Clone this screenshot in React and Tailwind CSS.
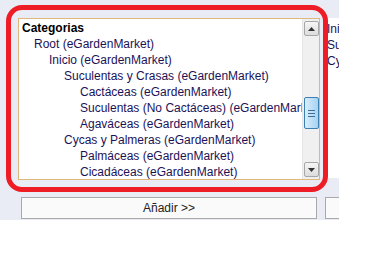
import React from "react";

const rows = [
  { t: "Categorias", pl: "pl-[3px]", bold: true },
  { t: "Root (eGardenMarket)", pl: "pl-[15px]" },
  { t: "Inicio (eGardenMarket)", pl: "pl-[30px]" },
  { t: "Suculentas y Crasas (eGardenMarket)", pl: "pl-[45px]" },
  { t: "Cactáceas (eGardenMarket)", pl: "pl-[61px]" },
  { t: "Suculentas (No Cactáceas) (eGardenMarket)", pl: "pl-[61px]" },
  { t: "Agaváceas (eGardenMarket)", pl: "pl-[61px]" },
  { t: "Cycas y Palmeras (eGardenMarket)", pl: "pl-[45px]" },
  { t: "Palmáceas (eGardenMarket)", pl: "pl-[61px]" },
  { t: "Cicadáceas (eGardenMarket)", pl: "pl-[61px]" },
];

function ArrowBtn({ up }) {
  return (
    <div className="mx-[1px] h-[15px] w-[15px] rounded-[2px] border border-[#a7a7a7] bg-gradient-to-b from-[#f6f6f6] to-[#dcdcdc] flex items-center justify-center">
      <svg width="7" height="4" viewBox="0 0 7 4">
        {up ? (
          <polygon points="0,4 7,4 3.5,0" fill="#333" />
        ) : (
          <polygon points="0,0 7,0 3.5,4" fill="#333" />
        )}
      </svg>
    </div>
  );
}

export default function App() {
  return (
    <div
      className="relative w-[339px] h-[220px] overflow-hidden bg-[#e9ecf5] text-[12px] leading-[16px]"
      style={{ fontFamily: '"Liberation Sans", Arial, sans-serif' }}
    >
      <div className="flex pt-[18px] pl-[18px]">
        <div className="w-[302px] shrink-0 flex flex-col">
          <div className="h-[162px] border border-[#dfb77a] bg-white flex overflow-hidden">
            <div className="flex-1 min-w-0 pt-[1px] overflow-hidden">
              {rows.map((r, i) => (
                <div
                  key={i}
                  className={`${r.pl} h-[16px] whitespace-nowrap ${
                    r.bold ? "font-bold text-black" : "text-[#1c1258]"
                  }`}
                >
                  {r.t}
                </div>
              ))}
            </div>
            <div className="w-[17px] shrink-0 bg-[#f0f0f0] border-l border-[#e6e6e6] flex flex-col items-center py-[2px]">
              <ArrowBtn up />
              <div className="flex-1 w-full flex flex-col items-center pt-[61px]">
                <div className="w-[15px] h-[32px] rounded-[2px] border border-[#3c7fb1] bg-gradient-to-r from-[#d9eefc] via-[#bfe0f8] to-[#a7d3f2] flex flex-col items-center justify-center gap-[2px]">
                  <div className="w-[7px] h-[1px] bg-[#3c6e98]" />
                  <div className="w-[7px] h-[1px] bg-[#3c6e98]" />
                  <div className="w-[7px] h-[1px] bg-[#3c6e98]" />
                </div>
              </div>
              <ArrowBtn />
            </div>
          </div>
          <button className="mt-[17px] mx-[3px] h-[22px] border border-[#a9a9a9] bg-[#fafafa] text-[#222] text-[12px]">
            Añadir &gt;&gt;
          </button>
        </div>
        <div className="ml-[3px] w-[120px] shrink-0 flex flex-col">
          <div className="h-[160px] bg-white pt-[3px] pl-[4px] text-[#1c1258]">
            <div className="h-[16px] whitespace-nowrap">Inicio (eGardenMarket)</div>
            <div className="h-[16px] whitespace-nowrap">Suculentas y Crasas</div>
            <div className="h-[16px] whitespace-nowrap">Cycas y Palmeras</div>
          </div>
          <button className="mt-[19px] ml-[2px] h-[22px] border border-[#a9a9a9] bg-[#fafafa]" />
        </div>
      </div>
      <div className="absolute left-[6px] top-[5px] w-[322px] h-[187px] rounded-[16px] border-[5px] border-[#ee1c25] pointer-events-none" />
    </div>
  );
}
